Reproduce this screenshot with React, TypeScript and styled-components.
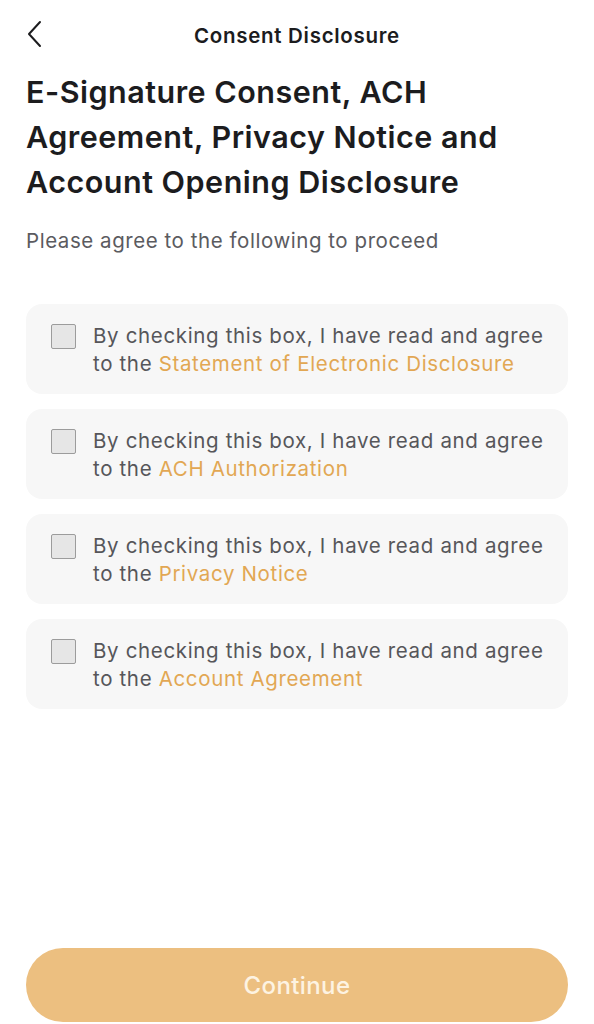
import React, { useState } from 'react';
import styled, { createGlobalStyle } from 'styled-components';

const GlobalStyle = createGlobalStyle`
  html, body {
    margin: 0;
    padding: 0;
    background: #ffffff;
  }
  * {
    box-sizing: border-box;
  }
`;

const Page = styled.div`
  width: 594px;
  height: 1024px;
  display: flex;
  flex-direction: column;
  padding: 0 26px;
  font-family: Inter, 'Noto Sans', sans-serif;
  color: #1c1c1e;
`;

const NavBar = styled.div`
  height: 70px;
  display: flex;
  align-items: center;
  justify-content: center;
  position: relative;
`;

const BackButton = styled.button`
  position: absolute;
  left: -6px;
  top: 18px;
  width: 32px;
  height: 32px;
  padding: 0;
  border: none;
  background: none;
  display: flex;
  align-items: center;
  justify-content: center;
  cursor: pointer;
`;

const NavTitle = styled.div`
  font-size: 20.5px;
  font-weight: 600;
  color: #1c1c1e;
  letter-spacing: 0.7px;
`;

const Heading = styled.h1`
  margin: -1px 0 0;
  font-size: 30.5px;
  line-height: 45px;
  font-weight: 600;
  letter-spacing: 0.5px;
  color: #1c1c1e;
`;

const Subtitle = styled.p`
  margin: 23px 0 0;
  font-size: 20.5px;
  line-height: 28px;
  letter-spacing: 0.55px;
  color: #5b5b5f;
`;

const List = styled.div`
  display: flex;
  flex-direction: column;
  gap: 15px;
  margin-top: 49px;
`;

const Card = styled.label`
  display: flex;
  align-items: flex-start;
  gap: 17px;
  min-height: 90px;
  padding: 18px 20px 16px 25px;
  background: #f7f7f7;
  border-radius: 16px;
  cursor: pointer;
`;

const Box = styled.span<{ $checked: boolean }>`
  flex: none;
  width: 25px;
  height: 25px;
  margin-top: 2px;
  border: 1.5px solid #9c9c9c;
  border-radius: 2px;
  background: ${(p) => (p.$checked ? '#e6b36b' : '#e6e6e6')};
  display: flex;
  align-items: center;
  justify-content: center;
`;

const CardText = styled.span`
  font-size: 20.5px;
  line-height: 28px;
  letter-spacing: 0.65px;
  color: #56565a;
`;

const LinkText = styled.span`
  color: #e2a753;
`;

const Spacer = styled.div`
  flex: 1;
`;

const ContinueButton = styled.button<{ $enabled: boolean }>`
  height: 74px;
  margin-bottom: 2px;
  border: none;
  border-radius: 37px;
  background: ${(p) => (p.$enabled ? '#e3a040' : '#ecbf80')};
  color: #fdf3e2;
  font-family: Inter, 'Noto Sans', sans-serif;
  font-size: 24px;
  font-weight: 500;
  letter-spacing: 0.4px;
  cursor: pointer;
`;

const items = [
  'Statement of Electronic Disclosure',
  'ACH Authorization',
  'Privacy Notice',
  'Account Agreement',
];

const App: React.FC = () => {
  const [checked, setChecked] = useState<boolean[]>(items.map(() => false));

  const toggle = (index: number) => {
    setChecked((prev) => prev.map((v, i) => (i === index ? !v : v)));
  };

  const allChecked = checked.every(Boolean);

  return (
    <Page>
      <GlobalStyle />
      <NavBar>
        <BackButton aria-label="Back">
          <svg width="22" height="28" viewBox="0 0 22 28" fill="none">
            <path d="M15 2 L4 14 L15 26" stroke="#1c1c1e" strokeWidth="2" strokeLinecap="round" strokeLinejoin="round" />
          </svg>
        </BackButton>
        <NavTitle>Consent Disclosure</NavTitle>
      </NavBar>
      <Heading>
        E-Signature Consent, ACH Agreement, Privacy Notice and Account Opening Disclosure
      </Heading>
      <Subtitle>Please agree to the following to proceed</Subtitle>
      <List>
        {items.map((item, i) => (
          <Card key={item} onClick={() => toggle(i)}>
            <Box $checked={checked[i]}>
              {checked[i] && (
                <svg width="16" height="16" viewBox="0 0 16 16" fill="none">
                  <path d="M3 8 L7 12 L13 4" stroke="#fff" strokeWidth="2" />
                </svg>
              )}
            </Box>
            <CardText>
              By checking this box, I have read and agree to the <LinkText>{item}</LinkText>
            </CardText>
          </Card>
        ))}
      </List>
      <Spacer />
      <ContinueButton $enabled={allChecked}>Continue</ContinueButton>
    </Page>
  );
};

export default App;
